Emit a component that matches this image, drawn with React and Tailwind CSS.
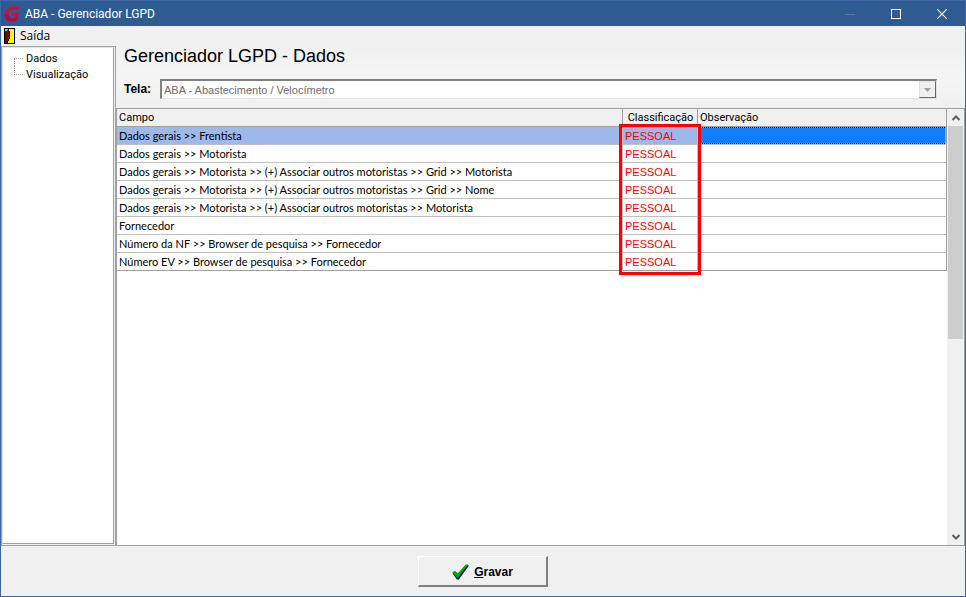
import React from 'react';

const fields = [
  'Dados gerais >> Frentista',
  'Dados gerais >> Motorista',
  'Dados gerais >> Motorista >> (+) Associar outros motoristas >> Grid >> Motorista',
  'Dados gerais >> Motorista >> (+) Associar outros motoristas >> Grid >> Nome',
  'Dados gerais >> Motorista >> (+) Associar outros motoristas >> Motorista',
  'Fornecedor',
  'Número da NF >> Browser de pesquisa >> Fornecedor',
  'Número EV >> Browser de pesquisa >> Fornecedor',
];

function TitleBar() {
  return (
    <header className="flex h-[25px] shrink-0 items-center bg-[#2f5b93] pl-[3px] font-[Roboto,sans-serif] text-xs text-white">
      <svg className="mr-[5px] h-4 w-4" viewBox="0 0 16 16">
        <path d="M15.5 0.5 L14.3 3.8 H8.5 Q5 4.2 4.6 8 Q4.6 11.8 7.5 12 H10 L10.6 9.8 H7.2 L8.3 6.6 H15 L13.5 12.5 Q12.6 15.5 9 15.6 H7 Q0.6 15 0.5 8.5 Q0.8 1.3 8 0.5 Z" fill="#c0143c" />
        <path d="M0.5 8.5 H4.6 Q4.6 11.8 7.5 12 H10 L13.5 12.5 Q12.6 15.5 9 15.6 H7 Q0.6 15 0.5 8.5 Z" fill="#a5124a" />
      </svg>
      <h1 className="grow">ABA - Gerenciador LGPD</h1>
      <button aria-label="Minimizar" disabled className="flex h-full w-[46px] items-center justify-center">
        <svg width="10" height="10"><path d="M0 5.5H10" stroke="#56789f" /></svg>
      </button>
      <button aria-label="Maximizar" className="flex h-full w-[46px] items-center justify-center">
        <svg width="10" height="10"><rect x="0.5" y="0.5" width="9" height="9" fill="none" stroke="#fff" /></svg>
      </button>
      <button aria-label="Fechar" className="flex h-full w-[46px] items-center justify-center">
        <svg width="10" height="10"><path d="M0.3 0.3L9.7 9.7M9.7 0.3L0.3 9.7" stroke="#fff" strokeWidth="1.2" /></svg>
      </button>
    </header>
  );
}

function MenuBar() {
  return (
    <nav className="flex h-5 shrink-0 items-center pl-[3px] font-['Open_Sans',sans-serif] text-xs">
      <button className="flex h-full items-center gap-[5px]">
        <svg width="11" height="16" shapeRendering="crispEdges">
          <rect width="11" height="16" fill="#000" />
          <rect x="1" y="1" width="9" height="14" fill="#ff0" />
          <path d="M1 1H5V11H4V13H3V15H1Z" fill="#800000" />
          <path d="M1 1H4V2H3V3H1Z" fill="#0ff" />
          <path d="M5 3H6V11H5ZM4 11H5V13H4ZM3 13H4V15H3Z" fill="#000" />
        </svg>
        Saída
      </button>
    </nav>
  );
}

function Sidebar() {
  return (
    <aside className="flex w-[115px] shrink-0 border border-[#a0a0a0] border-b-0 bg-[#f0f0f0] pb-px pr-px">
      <ul className="grow border border-[#e3e3e3] border-b-[#a0a0a0] border-r-[#a0a0a0] bg-white pl-[11px] pt-0.5 font-[Roboto,sans-serif] leading-4">
        <li className="flex">
          <span className="mt-2 h-2 w-[9px] border-l border-t border-dotted border-[#a0a0a0]" />
          <a href="#dados" className="pl-[3px] pt-px leading-[15px]">Dados</a>
        </li>
        <li className="flex">
          <span className="h-[9px] w-[9px] border-b border-l border-dotted border-[#a0a0a0]" />
          <a href="#visualizacao" className="pl-[3px] pt-px leading-[15px]">Visualização</a>
        </li>
      </ul>
    </aside>
  );
}

function ScreenForm() {
  return (
    <section className="h-[62px] shrink-0 bg-linear-to-b from-[#f0f0f0] via-[#f5f5f5] to-[#f0f0f0] pl-2 pr-7">
      <h2 className="font-['Liberation_Sans',Arial,sans-serif] text-lg leading-5">Gerenciador LGPD - Dados</h2>
      <div className="mt-[13px] flex items-center gap-[7px]">
        <label htmlFor="tela" className="w-[29px] whitespace-nowrap font-['Liberation_Sans',Arial,sans-serif] text-xs font-bold">Tela:</label>
        <div className="relative h-5 grow border-b border-l-2 border-r border-t-2 border-b-[#e3e3e3] border-l-[#808080] border-r-[#e3e3e3] border-t-[#808080] bg-white">
          <select id="tela" disabled className="block h-full w-full appearance-none pl-0.5 pt-px font-['Liberation_Sans',Arial,sans-serif] text-[#6d6d6d] opacity-100">
            <option>ABA - Abastecimento / Velocímetro</option>
          </select>
          <span className="pointer-events-none absolute right-0 top-0 flex h-full w-[17px] items-center justify-center border border-b-[#696969] border-l-[#e3e3e3] border-r-[#696969] border-t-[#e3e3e3] bg-[#f0f0f0]">
            <svg width="7" height="4"><path d="M0 0H7L3.5 4Z" fill="#a0a0a0" /></svg>
          </span>
        </div>
      </div>
    </section>
  );
}

function Grid() {
  return (
    <div className="flex grow border-l border-r border-t border-[#a0a0a0] bg-white">
      <div className="relative grow self-start">
        <table className="w-full table-fixed border-separate border-spacing-0 whitespace-nowrap leading-4">
          <colgroup>
            <col className="w-[506px]" />
            <col className="w-[75px]" />
            <col />
          </colgroup>
          <thead>
            <tr className="h-[18px] bg-[#f0f0f0] text-left font-[Roboto,sans-serif]">
              <th className="border-b border-r border-[#a0a0a0] p-0 pl-0.5 pt-px font-normal">Campo</th>
              <th className="border-b border-r border-[#a0a0a0] p-0 pl-px pt-px text-center font-normal">Classificação</th>
              <th className="border-b border-r border-[#a0a0a0] p-0 pl-0.5 pt-px font-normal">Observação</th>
            </tr>
          </thead>
          <tbody>
            {fields.map((field, i) => (
              <tr key={field} className="group h-[18px] first:bg-[#9db8eb]">
                <td className="border-b border-r border-[#c0c0c0] p-0 pl-0.5 pt-px group-last:border-b-[#a0a0a0]">{field}</td>
                <td className="border-b border-r border-[#c0c0c0] p-0 pl-0.5 pt-px font-['Liberation_Sans',Arial,sans-serif] text-[#f00] group-last:border-b-[#a0a0a0]">PESSOAL</td>
                <td className="border-b border-r border-b-[#c0c0c0] border-r-[#a0a0a0] p-0 group-last:border-b-[#a0a0a0]">
                  {i === 0 && (
                    <div className="h-[17px] bg-[repeating-linear-gradient(90deg,#000_0_1px,#e39a3c_1px_2px)] p-px">
                      <div className="h-full bg-[#117dff]" />
                    </div>
                  )}
                </td>
              </tr>
            ))}
          </tbody>
        </table>
        <div className="pointer-events-none absolute -bottom-1 left-[502px] top-[15px] w-[82px] border-3 border-[#f00]" />
      </div>
      <div className="flex w-[17px] shrink-0 flex-col bg-[#f0f0f0]">
        <button aria-label="Rolar para cima" className="flex h-[17px] items-center justify-center">
          <svg width="8" height="6"><path d="M0.5 5L4 1.5L7.5 5" fill="none" stroke="#606060" strokeWidth="2" /></svg>
        </button>
        <div className="grow">
          <div className="ml-px h-[53%] w-[15px] bg-[#cdcdcd]" />
        </div>
        <button aria-label="Rolar para baixo" className="flex h-[17px] items-center justify-center">
          <svg width="8" height="6"><path d="M0.5 1L4 4.5L7.5 1" fill="none" stroke="#606060" strokeWidth="2" /></svg>
        </button>
      </div>
    </div>
  );
}

export default function App() {
  return (
    <div className="flex h-screen flex-col border border-[#3c67a3] bg-[#f0f0f0] font-[Lato,sans-serif] text-[11px] text-black">
      <TitleBar />
      <MenuBar />
      <div className="flex min-h-0 grow">
        <Sidebar />
        <main className="flex min-w-0 grow flex-col">
          <ScreenForm />
          <Grid />
        </main>
      </div>
      <footer className="flex h-[51px] shrink-0 items-center justify-center border-t border-[#a0a0a0]">
        <button className="flex h-[31px] w-[130px] items-center justify-center gap-[5px] border border-b-2 border-r-2 border-b-[#808080] border-l-white border-r-[#808080] border-t-white bg-[#f0f0f0] pt-0.5 font-['Liberation_Sans',Arial,sans-serif] text-xs font-bold">
          <svg width="17" height="16" viewBox="0 0 17 16">
            <path d="M0.5 9.5L3.5 8L6 10.5L14.5 1L17 1.5L6.8 15.5H5Z" fill="#000080" />
            <path d="M0.3 8.5L2.8 6.8L5.8 9.3L13.8 0.5H16.3L6 13.8H4.8Z" fill="#00a800" />
          </svg>
          <span><u>G</u>ravar</span>
        </button>
      </footer>
    </div>
  );
}
